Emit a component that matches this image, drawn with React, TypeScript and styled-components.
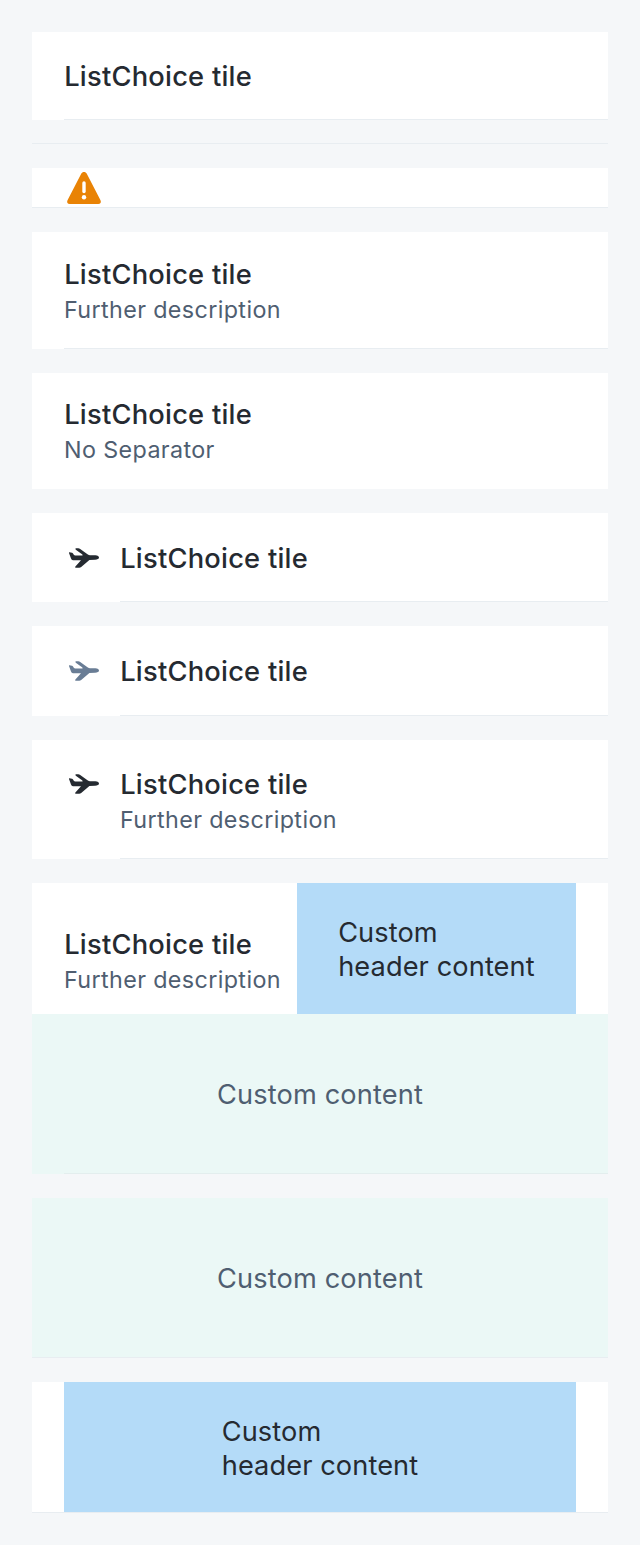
import React from "react";
import styled, { createGlobalStyle } from "styled-components";

const GlobalStyle = createGlobalStyle`
  *, *::before, *::after { box-sizing: border-box; }
  body {
    margin: 0;
    background: #f5f7f9;
    font-family: Inter, "Liberation Sans", sans-serif;
    color: #252a31;
  }
`;

const Page = styled.main`
  display: flex;
  flex-direction: column;
  gap: 24px;
  height: 1545px;
  padding: 32px;
`;

const Tile = styled.section<{ $height: number }>`
  display: flex;
  flex-direction: column;
  flex: none;
  height: ${(p) => p.$height}px;
  background: #fff;
`;

const EmptyTile = styled.section`
  flex: none;
  height: 0;
  margin: -1px 0 1px;
`;

const Header = styled.div<{ $top?: number }>`
  display: flex;
  flex: 1;
  min-height: 0;
  padding: ${(p) => p.$top ?? 0}px 32px 0;
`;

const Separator = styled.hr<{ $inset?: number; $overlap?: boolean }>`
  flex: none;
  height: 1px;
  margin: ${(p) => (p.$overlap ? -1 : 0)}px 0 0 ${(p) => p.$inset ?? 0}px;
  border: 0;
  background: ${(p) => (p.$overlap ? "#e3eeee" : "#e8edf1")};
`;

const IconSlot = styled.span<{ $color: string }>`
  display: block;
  flex: none;
  width: 40px;
  height: 40px;
  margin-right: 16px;
  color: ${(p) => p.$color};

  svg { display: block; }
`;

const Texts = styled.div<{ $top?: number }>`
  flex: none;
  padding-top: ${(p) => p.$top ?? 0}px;
`;

const Title = styled.div`
  padding-left: 0.2px;
  font-size: 27.3px;
  font-weight: 480;
  letter-spacing: 0.23px;
  line-height: 38px;
  white-space: nowrap;
`;

const Description = styled.div`
  color: #4f5e71;
  font-size: 23.3px;
  letter-spacing: 0.38px;
  line-height: 32px;
  white-space: nowrap;
`;

const HeaderContent = styled.div<{ $gap?: number }>`
  display: flex;
  flex: 1;
  align-items: center;
  justify-content: center;
  margin-left: ${(p) => p.$gap ?? 0}px;
  padding-top: 3px;
  background: #b4dbf8;
  font-size: 27.2px;
  letter-spacing: 0.1px;
  line-height: 34px;
`;

const Content = styled.div<{ $height: number }>`
  display: flex;
  flex: none;
  justify-content: center;
  height: ${(p) => p.$height}px;
  padding-top: 64px;
  background: #ebf8f6;
  color: #4f5e71;
  font-size: 27.2px;
  letter-spacing: 0.15px;
  line-height: 34px;
`;

const Airplane = () => (
  <svg width="40" height="40" viewBox="0 0 40 40" fill="currentColor">
    <path d="M5.4 14.2L8 14.8Q8.6 15 9 15.6L9.8 16.8Q10.3 17.6 11.3 17.6H18.6L18.4 16.4L11.8 11.7Q10.7 10.5 12 10.3H14.3Q15.3 10.3 16.2 10.9L22.8 15.8Q24.2 17.2 25.8 17.2H31.3C33.8 17.2 35 18.4 35 19.5C35 20.8 33.5 21.6 31 21.8L25.4 22.1L17.2 28.9Q16.3 29.7 15.2 29.7H11.8Q10.4 29.5 11.4 28.6L17 22.2H9Q7.5 22.1 7 20.6L5 15Q4.8 14.2 5.4 14.2Z" />
  </svg>
);

const Alert = () => (
  <svg width="40" height="40" viewBox="0 0 40 40">
    <path
      fill="currentColor"
      d="M17.2 5.7C18.3 3.5 21.7 3.5 22.8 5.7L36.5 32.2C37.5 34.3 36.4 36 34.2 36H5.8C3.6 36 2.5 34.3 3.5 32.2Z"
    />
    <path d="M20 14.9V23.5" stroke="#fff" strokeWidth="3.4" strokeLinecap="round" />
    <circle cx="20" cy="29.3" r="2.2" fill="#fff" />
  </svg>
);

const CustomHeader = ({ gap }: { gap?: number }) => (
  <HeaderContent $gap={gap}>
    <div>
      Custom
      <br />
      header content
    </div>
  </HeaderContent>
);

export default function App() {
  return (
    <>
      <GlobalStyle />
      <Page>
        <Tile $height={88}>
          <Header $top={26}><Title>ListChoice tile</Title></Header>
          <Separator $inset={32} />
        </Tile>
        <EmptyTile>
          <Separator />
        </EmptyTile>
        <Tile $height={40}>
          <Header><IconSlot $color="#e98305"><Alert /></IconSlot></Header>
          <Separator />
        </Tile>
        <Tile $height={117}>
          <Header $top={24}>
            <Texts><Title>ListChoice tile</Title><Description>Further description</Description></Texts>
          </Header>
          <Separator $inset={32} />
        </Tile>
        <Tile $height={116}>
          <Header $top={23}>
            <Texts><Title>ListChoice tile</Title><Description>No Separator</Description></Texts>
          </Header>
        </Tile>
        <Tile $height={89}>
          <Header $top={25}>
            <IconSlot $color="#252a31"><Airplane /></IconSlot>
            <Texts $top={2}><Title>ListChoice tile</Title></Texts>
          </Header>
          <Separator $inset={88} />
        </Tile>
        <Tile $height={90}>
          <Header $top={25}>
            <IconSlot $color="#697d95"><Airplane /></IconSlot>
            <Texts $top={2}><Title>ListChoice tile</Title></Texts>
          </Header>
          <Separator $inset={88} />
        </Tile>
        <Tile $height={119}>
          <Header $top={24}>
            <IconSlot $color="#252a31"><Airplane /></IconSlot>
            <Texts $top={2}><Title>ListChoice tile</Title><Description>Further description</Description></Texts>
          </Header>
          <Separator $inset={88} />
        </Tile>
        <Tile $height={291}>
          <Header>
            <Texts $top={43}><Title>ListChoice tile</Title><Description>Further description</Description></Texts>
            <CustomHeader gap={16} />
          </Header>
          <Content $height={160}>Custom content</Content>
          <Separator $inset={32} $overlap />
        </Tile>
        <Tile $height={160}>
          <Content $height={159}>Custom content</Content>
          <Separator />
        </Tile>
        <Tile $height={131}>
          <Header><CustomHeader /></Header>
          <Separator />
        </Tile>
      </Page>
    </>
  );
}
